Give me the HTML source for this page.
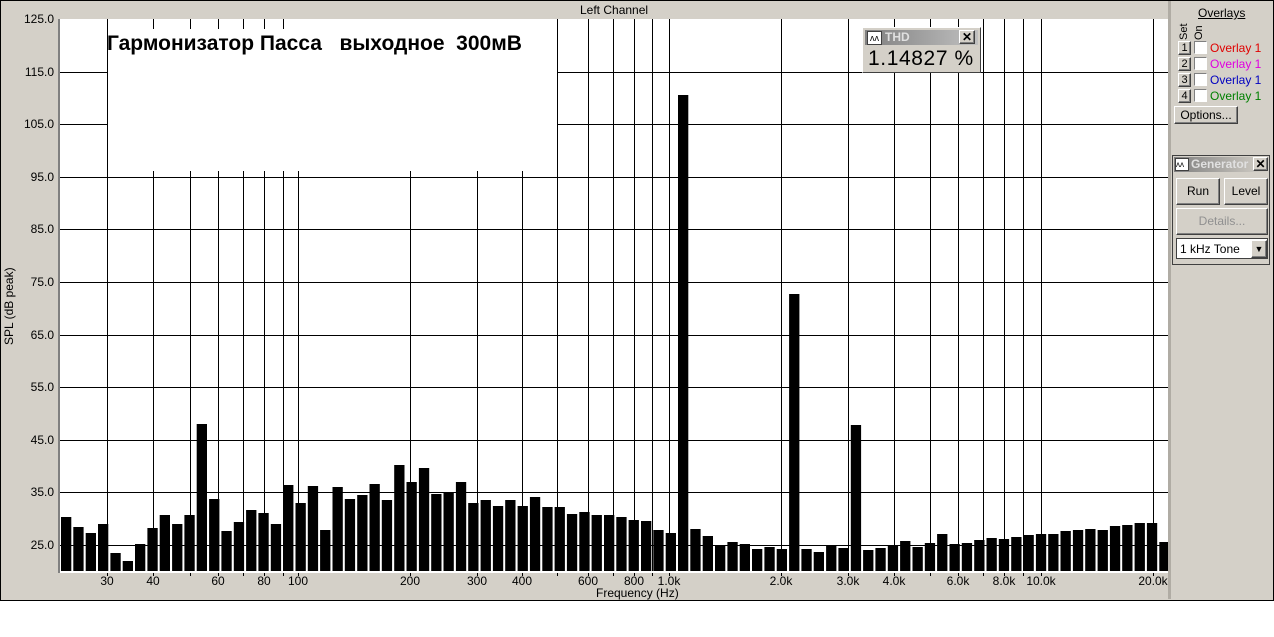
<!DOCTYPE html>
<html><head><meta charset="utf-8"><style>
body{margin:0;width:1274px;height:637px;background:#fff;overflow:hidden;font-family:"Liberation Sans",sans-serif}
#win{position:absolute;left:0;top:0;width:1272px;height:599px;background:#d4d0c8;border:1px solid #000}
.t{position:absolute;font-size:12px;color:#000;white-space:nowrap}
.btn{position:absolute;background:#d4d0c8;border:1px solid;border-color:#fff #404040 #404040 #fff;box-shadow:inset -1px -1px 0 #808080;font-size:12px;text-align:center}
</style></head><body>
<div id="win"></div>
<svg id="s" width="1274" height="637" style="position:absolute;left:0;top:0" font-family="Liberation Sans, sans-serif"></svg>
<div class="t" style="left:580px;top:3px">Left Channel</div>
<div class="t" style="left:596px;top:586px">Frequency (Hz)</div>
<div class="t" style="left:2px;top:345px;transform:rotate(-90deg);transform-origin:0 0">SPL (dB peak)</div>
<div class="t" style="left:107px;top:32px;font-size:21px;font-weight:bold">Гармонизатор Пасса&nbsp;&nbsp; выходное&nbsp; 300мВ</div>
<!-- THD -->
<div style="position:absolute;left:862px;top:27px;width:117px;height:44px;background:#d4d0c8;border:1px solid;border-color:#fff #404040 #404040 #fff">
<div style="position:absolute;left:2px;top:2px;width:113px;height:15px;background:linear-gradient(90deg,#808080,#c0c0c0)"></div>
<div style="position:absolute;left:4px;top:3px;width:13px;height:12px;background:#fff;border:1px solid #404040;font-size:9px;line-height:12px;text-align:center">ʌʌ</div>
<div style="position:absolute;left:22px;top:2px;font-size:12px;font-weight:bold;color:#e0e0e0">THD</div>
<div class="btn" style="left:96px;top:2px;width:14px;height:12px;line-height:12px;font-weight:bold">✕</div>
<div style="position:absolute;left:5px;top:19px;font-size:21px;letter-spacing:0.6px;white-space:nowrap">1.14827 %</div>
</div>
<!-- overlays -->
<div class="t" style="left:1198px;top:6px;text-decoration:underline">Overlays</div>
<div class="t" style="left:1178px;top:40px;transform:rotate(-90deg);transform-origin:0 0;font-size:11px">Set</div>
<div class="t" style="left:1193px;top:40px;transform:rotate(-90deg);transform-origin:0 0;font-size:11px">On</div>
<div id="ov"></div>
<div class="btn" style="left:1174px;top:106px;width:62px;height:16px;line-height:16px">Options...</div>
<!-- generator -->
<div style="position:absolute;left:1172px;top:155px;width:96px;height:108px;background:#d4d0c8;border:1px solid #404040">
<div style="position:absolute;left:1px;top:1px;width:94px;height:15px;background:linear-gradient(90deg,#808080,#d4d0c8)"></div>
<div style="position:absolute;left:2px;top:2px;width:12px;height:11px;background:#fff;border:1px solid #404040;font-size:8px;line-height:11px">ʌʌ</div>
<div style="position:absolute;left:18px;top:1px;font-size:12px;font-weight:bold;color:#e0e0e0">Generator</div>
<div class="btn" style="left:80px;top:1px;width:13px;height:12px;line-height:12px;font-weight:bold;background:#d4d0c8">✕</div>
<div class="btn" style="left:3px;top:22px;width:42px;height:25px;line-height:25px">Run</div>
<div class="btn" style="left:51px;top:22px;width:42px;height:25px;line-height:25px">Level</div>
<div class="btn" style="left:3px;top:52px;width:90px;height:25px;line-height:25px;color:#909090">Details...</div>
<div style="position:absolute;left:3px;top:82px;height:21px;background:#fff;border:1px solid #404040;font-size:12px;line-height:21px;padding-left:3px;box-sizing:border-box;width:92px">1 kHz Tone</div>
<div class="btn" style="left:78px;top:84px;width:14px;height:16px;line-height:16px;font-size:9px">▼</div>
</div>
<script>
const s=document.getElementById('s');let h='';
const Y=d=>19+(125-d)*5.26;
h+='<rect x="60" y="19" width="1108" height="552" fill="#fff"/>';
h+='<rect x="58" y="19" width="2" height="554" fill="#808080"/>';
const gx=[107,153,190,218,243,264,283,298,410,477,522,557,588,613,634,652,669,781,848,894,930,958,983,1004,1023,1041,1153];
gx.forEach(x=>{h+=`<line x1="${x+.5}" y1="19" x2="${x+.5}" y2="576" stroke="#000"/>`});
for(let d=115;d>=25;d-=10){const y=Math.round(Y(d))+.5;h+=`<line x1="60" y1="${y}" x2="1168" y2="${y}" stroke="#000"/>`}
h+='<rect x="108" y="29" width="449" height="142" fill="#fff"/><rect x="108" y="19" width="449" height="10" fill="#fff"/>';
[153,190,218,243,264,283].forEach(x=>h+=`<line x1="${x+.5}" y1="19" x2="${x+.5}" y2="29" stroke="#000"/>`);
const tops=[517,527,533,524,553,561,544,528,515,524,515,424,499,531,522,510,513,524,485,503,486,530,487,499,495,484,500,465,482,468,494,492,482,503,500,506,500,506,497,507,507,514,512,515,515,517,520,521,530,533,95,529,536,546,542,544,549,547,549,294,549,552,546,548,425,550,548,545,541,547,543,534,544,543,540,538,539,537,535,534,534,531,530,529,530,526,525,523,523,542];
tops.forEach((t,i)=>{const x=61+i*12.34;h+=`<rect x="${x.toFixed(1)}" y="${t}" width="10.3" height="${571-t}" fill="#000"/>`});
h+='<rect x="60" y="571" width="1108" height="2" fill="#fff"/>';
for(let d=125;d>=25;d-=10){const y=Math.round(Y(d));h+=`<text x="54" y="${y+4}" font-size="12" text-anchor="end">${d.toFixed(1)}</text>`}
const lb=[[107,'30'],[153,'40'],[218,'60'],[264,'80'],[298,'100'],[410,'200'],[477,'300'],[522,'400'],[588,'600'],[634,'800'],[669,'1.0k'],[781,'2.0k'],[848,'3.0k'],[894,'4.0k'],[958,'6.0k'],[1004,'8.0k'],[1041,'10.0k'],[1153,'20.0k']];
lb.forEach(([x,t])=>h+=`<text x="${x}" y="585" font-size="12" text-anchor="middle">${t}</text>`);
h+='<rect x="1168" y="1" width="3" height="598" fill="#b0aca4"/>';
s.innerHTML=h;
const cols=['#e00000','#e000e0','#0000c0','#008000'];let o='';
for(let i=0;i<4;i++){const y=41+i*16;
o+=`<div class="btn" style="left:1178px;top:${y}px;width:11px;height:12px;line-height:12px;font-size:11px">${i+1}</div>`;
o+=`<div style="position:absolute;left:1194px;top:${y}px;width:11px;height:11px;background:#fff;border:1px solid;border-color:#808080 #fff #fff #808080"></div>`;
o+=`<div class="t" style="left:1210px;top:${y}px;color:${cols[i]}">Overlay 1</div>`}
document.getElementById('ov').innerHTML=o;
</script>
</body></html>
